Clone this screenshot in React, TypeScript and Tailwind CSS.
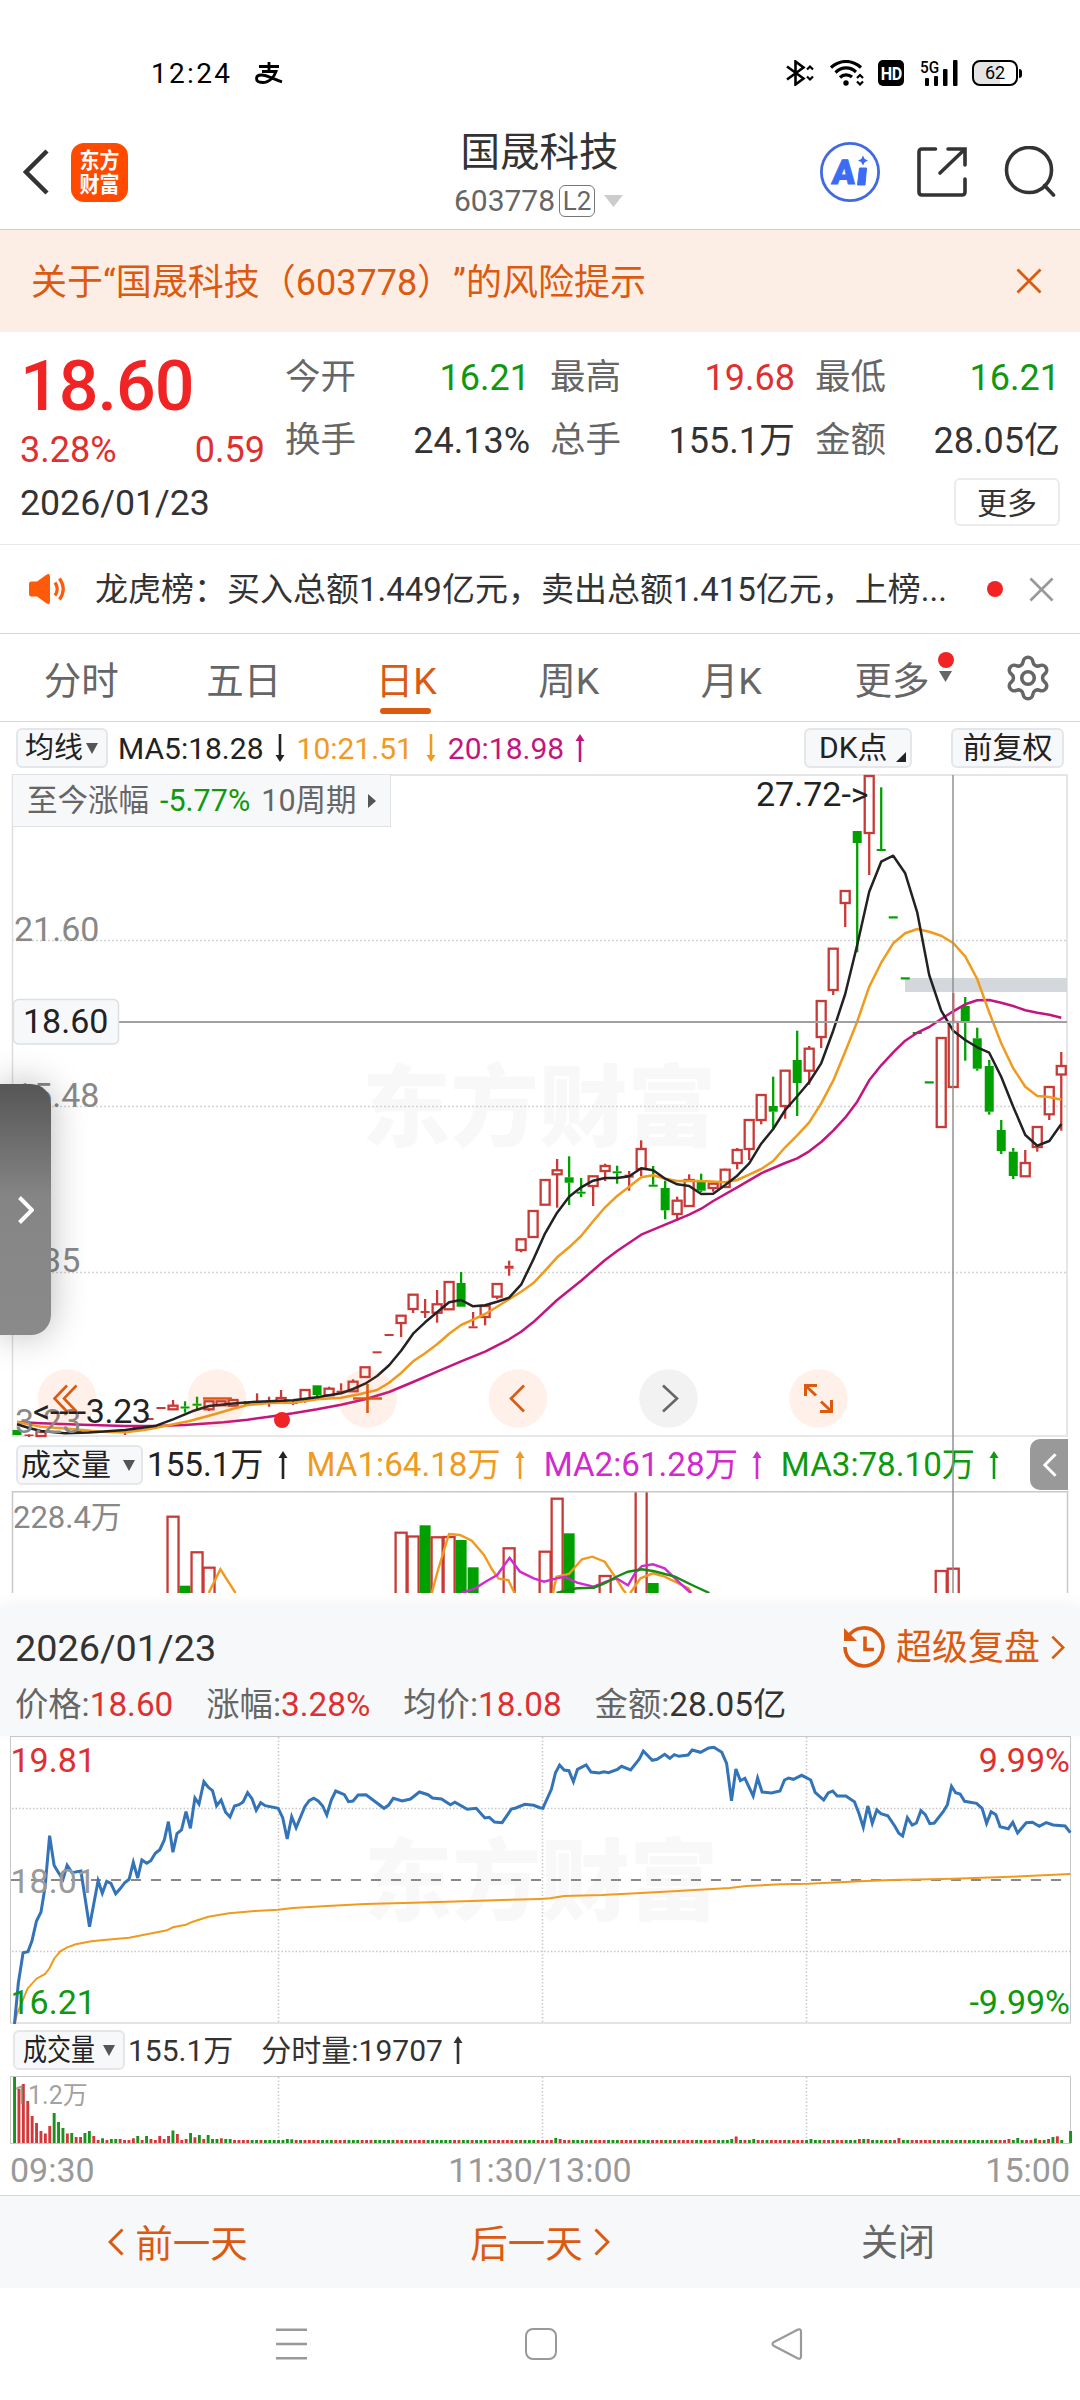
import { FunctionComponent, ReactNode } from "react";
import { Settings } from "lucide-react";

type Point = [number, number];

// [index, direction, high, bodyTop, bodyBottom, low]
type Candle = [number, "r" | "g", number, number, number, number];

const RED = "#c93a37";
const GREEN = "#00a000";
const ORANGE = "#f09a1e";
const MAGENTA = "#c4157f";

const candleX = (index: number) => 17 + index * 12.003;

const candles: Candle[] = [
    [0, "g", 1430, 1430, 1435, 1435],
    [1, "r", 1434, 1434.5, 1436, 1437],
    [2, "r", 1432, 1432, 1436, 1437],
    [3, "r", 1431, 1431, 1433, 1433],
    [5, "r", 1431, 1431, 1432, 1433],
    [7, "r", 1431, 1431, 1432, 1433],
    [8, "r", 1430, 1430, 1431, 1432],
    [9, "r", 1430, 1431, 1432, 1435],
    [10, "r", 1427, 1427, 1429, 1429],
    [11, "r", 1418, 1418, 1420, 1420],
    [12, "r", 1407, 1407, 1409, 1409],
    [13, "r", 1400, 1405.7, 1409.3, 1409.3],
    [14, "g", 1401.3, 1406.5, 1408.5, 1412.7],
    [15, "g", 1396.7, 1403.7, 1405.7, 1410.7],
    [16, "r", 1401.3, 1401.3, 1409.3, 1411],
    [17, "r", 1401, 1401.3, 1405.3, 1406],
    [18, "r", 1400, 1400, 1405.7, 1406],
    [19, "g", 1401, 1402, 1404, 1405.5],
    [20, "r", 1393.3, 1401, 1403, 1403],
    [21, "r", 1396.7, 1401.3, 1403.3, 1406.7],
    [22, "r", 1390, 1398, 1401.7, 1402],
    [23, "r", 1400, 1402, 1404, 1405],
    [24, "r", 1390, 1390, 1399.3, 1402.7],
    [25, "g", 1385.3, 1385.3, 1395, 1397],
    [26, "r", 1386.7, 1388.7, 1395.3, 1396],
    [27, "r", 1383.3, 1390.7, 1392.7, 1393],
    [28, "r", 1379.3, 1381.7, 1391.3, 1391.3],
    [29, "r", 1367.3, 1367.3, 1377, 1377],
    [30, "r", 1351.3, 1351.3, 1353.3, 1353.3],
    [31, "r", 1334, 1334, 1336, 1336],
    [32, "r", 1315.7, 1315.7, 1323, 1337],
    [33, "r", 1294.7, 1294.7, 1309, 1313],
    [34, "r", 1299, 1311, 1313, 1318],
    [35, "r", 1290, 1304.3, 1312.7, 1322.7],
    [36, "r", 1282, 1282, 1309.3, 1310],
    [37, "g", 1272, 1283, 1306.7, 1306.7],
    [38, "r", 1312, 1326.3, 1328.3, 1328.3],
    [39, "r", 1306, 1306, 1317, 1325.3],
    [40, "r", 1284, 1284, 1296.7, 1299.3],
    [41, "r", 1260.7, 1265.7, 1268.7, 1275.7],
    [42, "r", 1239.3, 1239.3, 1250, 1252.3],
    [43, "r", 1211, 1211, 1237, 1238],
    [44, "r", 1180, 1180, 1204.7, 1205],
    [45, "r", 1159, 1170.3, 1174.3, 1207.7],
    [46, "g", 1156.3, 1177.3, 1182.7, 1205],
    [47, "g", 1178, 1191.7, 1193.7, 1197],
    [48, "r", 1176.3, 1176.3, 1186, 1206],
    [49, "r", 1163.7, 1166, 1171, 1181],
    [50, "g", 1165.7, 1171.3, 1173.3, 1183.7],
    [51, "r", 1171, 1174.7, 1177.7, 1190.7],
    [52, "r", 1140.3, 1149, 1169, 1176],
    [53, "g", 1166, 1184.7, 1186.7, 1186.7],
    [54, "g", 1180.7, 1188, 1210.3, 1219.3],
    [55, "r", 1196.7, 1200.7, 1214, 1220.7],
    [56, "r", 1174.3, 1180, 1206, 1206],
    [57, "g", 1173.7, 1180, 1190.7, 1192],
    [58, "r", 1183, 1183.7, 1188, 1191.7],
    [59, "r", 1168.7, 1169.7, 1187, 1187],
    [60, "r", 1148, 1150, 1163, 1169.3],
    [61, "r", 1120, 1120, 1149, 1160],
    [62, "r", 1095, 1095, 1120, 1124.3],
    [63, "g", 1076.7, 1106, 1111.7, 1128],
    [64, "r", 1070.7, 1070.7, 1106, 1118.7],
    [65, "g", 1030.7, 1060, 1083, 1116],
    [66, "r", 1046, 1048.7, 1070.7, 1084.7],
    [67, "r", 1001, 1001, 1037, 1048],
    [68, "r", 948.7, 948.7, 990, 995],
    [69, "r", 891, 891, 903, 927],
    [70, "g", 831, 831, 843, 952.3],
    [71, "r", 776, 776, 833, 875],
    [72, "g", 787.3, 849, 851, 851],
    [73, "g", 916.3, 916.3, 918.5, 918.3],
    [74, "g", 977.3, 977.3, 979.5, 979.3],
    [75, "g", 1032, 1032, 1034, 1034],
    [76, "g", 1081.3, 1081.3, 1083.5, 1083.3],
    [77, "r", 1038, 1038, 1127, 1127],
    [78, "r", 993, 1022, 1087, 1087],
    [79, "g", 997, 1006, 1022.3, 1060.7],
    [80, "g", 1027.7, 1038.3, 1068.7, 1070.7],
    [81, "g", 1060, 1066, 1111.7, 1114.7],
    [82, "g", 1120, 1130, 1151, 1154],
    [83, "g", 1148, 1151.7, 1176, 1179],
    [84, "r", 1150, 1163, 1176.3, 1176.3],
    [85, "r", 1127, 1127, 1147, 1151.7],
    [86, "r", 1087, 1087, 1114.3, 1120],
    [87, "r", 1052, 1066, 1074.5, 1130.7],
];

const ma5: Point[] = [
    [0, 1424.3], [1, 1428], [2, 1431], [4, 1433.3], [6, 1432.5], [9, 1430], [10.3, 1428], [11.6, 1425.7],
    [13, 1419.3], [14.6, 1411.3], [16, 1406], [18, 1403.5], [20, 1401.7], [23, 1400.3], [25, 1397.3],
    [27, 1393.3], [28, 1389], [29, 1383.7], [30, 1376], [31, 1365.3], [32, 1350.7], [33, 1333.7],
    [34, 1322.3], [35, 1312.3], [36, 1302.3], [37, 1300], [38, 1306.3], [39, 1305.3], [40, 1301.7],
    [41, 1297.7], [42, 1284.7], [43, 1260], [44, 1233.3], [45, 1212.7], [46, 1196.7], [47, 1187.3],
    [48, 1180.7], [49, 1178], [50, 1178], [51, 1176.3], [52, 1168.3], [53, 1170.3], [54, 1178.7],
    [55, 1184.3], [56, 1186], [57, 1194], [58, 1193.7], [59, 1185], [60, 1175.7], [61, 1163.3],
    [62, 1143.7], [63, 1129], [64, 1110], [65, 1096.3], [66, 1082], [67, 1063.3], [68, 1030.7],
    [69, 994], [70, 945], [71, 891.7], [72, 861.7], [73, 855.7], [74, 873.3], [75, 912.3], [76, 975],
    [77, 1010.7], [78, 1030.7], [79, 1040], [80, 1047.3], [81, 1052.7], [82, 1076.7], [83, 1106.7],
    [84, 1135], [85, 1145.7], [86, 1141], [87, 1124],
];

const ma10: Point[] = [
    [0, 1422], [2, 1426.7], [4.3, 1428.7], [7, 1431.7], [9, 1432.3], [10.6, 1430], [12.3, 1426],
    [14.3, 1421.3], [16.3, 1414.7], [18, 1408.7], [19.2, 1405], [21, 1403], [23, 1402.7], [25, 1399.3],
    [27, 1397.7], [28.5, 1394.3], [30, 1390], [31, 1382.7], [32, 1373], [33, 1361.3], [34, 1353.3],
    [35, 1344.3], [36, 1333.7], [37, 1325], [38, 1319.7], [39, 1314], [40, 1306.7], [41, 1299.3],
    [42, 1291.7], [43, 1283.3], [44, 1270.7], [45, 1257.3], [46, 1247.3], [47, 1236], [48, 1221.3],
    [49, 1207.3], [50, 1196], [51, 1186.7], [52, 1177.3], [53, 1175.3], [54, 1178.7], [55, 1181],
    [57, 1181], [59, 1182.3], [60, 1180], [61, 1174.7], [62, 1169], [63, 1161], [64, 1147.3],
    [65, 1135.3], [66, 1122.3], [67, 1103.3], [68, 1080.7], [69, 1051.7], [70, 1021.7], [71, 986.7],
    [72, 962.7], [73, 943.3], [74, 933.3], [75, 929], [76, 931.7], [77, 935.7], [78, 943], [79, 956.3],
    [80, 979], [81, 1012.3], [82, 1043.3], [83, 1068.3], [84, 1086.7], [85, 1096], [86, 1097], [87, 1099.7],
];

const ma20: Point[] = [
    [0, 1422], [2, 1423.3], [5.5, 1424.7], [9, 1426], [11.5, 1426], [14, 1425], [17.2, 1422.3],
    [19.2, 1419.7], [21, 1416.7], [23, 1413.3], [25, 1409.3], [27, 1404.7], [29, 1399.3], [31, 1392],
    [33, 1382], [35, 1371.7], [37, 1361.3], [39, 1351.7], [41, 1339.3], [42, 1331.7], [43, 1322.3],
    [45, 1300], [47, 1280.7], [49, 1260], [50, 1251], [52, 1234.7], [54, 1224.7], [56, 1214.7],
    [57, 1208.7], [58, 1201], [60, 1187.3], [62, 1173.3], [64, 1163], [65, 1158.3], [66, 1151.3],
    [67, 1142], [68, 1130.7], [69, 1117.7], [70, 1101.7], [71, 1080.3], [72, 1065.3], [73, 1052.3],
    [74, 1040.7], [75, 1032.7], [76, 1027], [77, 1019], [78, 1011.3], [79, 1004.3], [80, 1000.3],
    [81, 1000], [82, 1002.7], [83, 1006], [84, 1010.3], [85, 1012.7], [86, 1014.7], [87, 1017.7],
];

// [index, direction, top]
const volumes: [number, "r" | "g", number][] = [
    [13, "r", 1516.7], [14, "g", 1585.7], [15, "r", 1552.3], [16, "r", 1567.7], [32, "r", 1532.7],
    [33, "r", 1536.5], [34, "g", 1525.3], [35, "r", 1537.3], [36, "r", 1537], [37, "g", 1540],
    [38, "g", 1567.3], [41, "r", 1548.3], [44, "r", 1551.7], [45, "r", 1498.7], [46, "g", 1533.3],
    [49, "r", 1576], [52, "r", 1490], [53, "g", 1583], [77, "r", 1571], [78, "r", 1568.7],
];

const volumeLines = [
    { color: ORANGE, points: "208.7,1593 220.4,1569.3 235.5,1593" },
    { color: ORANGE, points: "431.8,1593 438,1570 449,1534 460,1535 471.8,1540.7 484,1555 492.4,1570 498.6,1578.7 508.3,1580 514.5,1593" },
    { color: ORANGE, points: "553,1593 556.5,1576.7 568.9,1574 582,1559.3 592.3,1556.7 604.7,1561.7 615,1576.7 623.3,1590 626,1593" },
    { color: ORANGE, points: "630.2,1593 640.5,1578.3 652.9,1573.3 664.6,1576.7 688.7,1588.3 691.5,1593" },
    { color: "#d02ad0", points: "461.4,1593 475.2,1588.3 485.5,1581.7 497.2,1575 509.6,1557.7 520,1571.7 533.7,1578.3 544,1581.7 556.5,1578.3 564.7,1576.7 577,1582.7 593.7,1586.7 606,1581.7 616.4,1578.3 628,1585.3 635,1573.3 641.9,1566 652.9,1564.3 664.6,1568.3 678.4,1581.7 690.8,1593" },
    { color: "#148c14", points: "556.5,1593 568.2,1590 577,1588.3 593.7,1587.7 606,1582.7 616.4,1576.7 628,1571.7 641.9,1569.3 654.3,1571.3 674.9,1576.7 692,1585 709.4,1593" },
];

// intraday series, one list for each half of the session
const morning: Point[] = [
    [42, 912], [53, 790], [67, 698], [81, 695], [93, 662], [106, 603], [119, 576], [131, 500], [144, 347],
    [157, 436], [170, 458], [183, 478], [195, 436], [209, 458], [235, 453], [260, 620], [285, 482],
    [297, 520], [310, 484], [322, 490], [336, 521], [350, 505], [362, 488], [375, 478], [387, 427],
    [400, 474], [412, 420], [426, 430], [438, 422], [451, 400], [464, 389], [477, 360], [489, 305],
    [502, 397], [514, 341], [527, 330], [540, 275], [553, 325], [566, 234], [578, 252], [592, 185],
    [605, 202], [617, 212], [629, 257], [642, 240], [655, 277], [668, 291], [681, 258], [694, 254],
    [706, 246], [719, 218], [732, 237], [744, 271], [757, 248], [770, 257], [808, 265], [821, 293],
    [834, 357], [847, 290], [860, 323], [885, 260], [898, 242], [911, 235], [924, 243], [937, 258],
    [949, 285], [962, 240], [975, 213], [1000, 224], [1012, 245], [1025, 243], [1040, 225], [1063, 224],
    [1090, 245], [1115, 265], [1128, 256], [1142, 235], [1168, 243], [1192, 237], [1218, 216],
    [1243, 224], [1256, 234], [1282, 237], [1308, 254], [1321, 247], [1357, 268], [1383, 265],
    [1408, 294], [1421, 292], [1436, 306], [1458, 308], [1485, 267], [1498, 264], [1524, 253],
    [1550, 256], [1568, 263],
];

const afternoon: Point[] = [
    [8, 265], [33, 208], [45, 158], [57, 135], [70, 150], [84, 152], [97, 185], [109, 148], [134, 135],
    [148, 156], [172, 159], [186, 155], [199, 158], [225, 148], [237, 139], [263, 150], [288, 118],
    [300, 93], [326, 121], [340, 118], [362, 103], [377, 115], [390, 104], [403, 109], [430, 105],
    [442, 90], [466, 97], [490, 84], [505, 82], [528, 97], [542, 130], [556, 242], [569, 147],
    [582, 182], [595, 175], [619, 228], [632, 174], [645, 216], [672, 219], [697, 213], [710, 180],
    [722, 174], [736, 178], [760, 166], [786, 180], [799, 217], [824, 240], [837, 219], [850, 213],
    [863, 228], [888, 228], [913, 245], [926, 280], [939, 322], [952, 258], [965, 310], [978, 270],
    [990, 281], [1010, 287], [1030, 318], [1042, 340], [1053, 348], [1067, 293], [1081, 315],
    [1093, 309], [1106, 272], [1119, 284], [1132, 311], [1145, 309], [1171, 275], [1183, 254],
    [1195, 199], [1207, 218], [1220, 222], [1233, 244], [1268, 250], [1284, 265], [1297, 310],
    [1310, 275], [1324, 284], [1336, 320], [1360, 326], [1373, 307], [1387, 339], [1412, 308],
    [1430, 307], [1450, 319], [1470, 308], [1490, 315], [1525, 318], [1540, 338],
];

const averageMorning: Point[] = [
    [42, 912], [50, 880], [67, 838], [80, 806], [106, 776], [131, 762], [144, 744], [157, 716], [175, 694],
    [195, 682], [220, 673], [265, 664], [310, 659], [375, 653], [430, 642], [485, 631], [502, 622],
    [540, 614], [560, 605], [605, 590], [665, 580], [740, 573], [808, 569], [850, 564], [950, 558],
    [1060, 552], [1200, 548], [1370, 543], [1480, 539], [1568, 537],
];

const averageAfternoon: Point[] = [
    [0, 537], [30, 535], [70, 528], [180, 525], [280, 520], [400, 513], [550, 504], [600, 498],
    [700, 493], [780, 491], [930, 484], [1020, 480], [1200, 476], [1400, 469], [1540, 462],
];

const minuteDirections =
    "grrrrrrrrgggrgrrggrrgrggrrrrgrgrrrrrgrrrgrgrgggrgg" +
    "rrrrggrgggggggrgrrrrgggrrrgggrrrgggggrrgrrrrggggggrrggrgggrrrrr" +
    "rgrgggrrrrgrrrgggrgrrrgggrrrrgggrrrgrgrrrrggrrrggggrgrggrrgrrrrgrr" +
    "rggggrrgrrgggrgrgggrgrrggrrrrrgrggrggrgggggrgrrrgggrrgrgrgrggrrgg";

const minuteHeights: Record<number, number> = {
    0: 66, 1: 54, 2: 59, 3: 42, 4: 27, 5: 20, 6: 12, 7: 9.5, 8: 17, 9: 30, 10: 21, 11: 15, 12: 9.5, 13: 10,
    14: 6, 15: 6, 16: 10, 17: 12, 18: 7, 20: 4.7, 22: 4, 23: 4, 24: 4, 27: 4.7, 28: 7, 30: 7, 31: 4, 33: 7,
    34: 4, 35: 7, 36: 12.5, 37: 9, 39: 4, 40: 10, 41: 5.7, 42: 8, 43: 4, 44: 8, 45: 4, 46: 4, 47: 4.7,
    48: 4, 49: 4, 62: 4, 63: 3.7, 123: 5, 124: 4, 163: 4, 164: 6.5, 168: 4, 181: 4, 192: 4, 193: 4, 194: 4,
    201: 5, 226: 4, 228: 5, 232: 4.5, 235: 4, 236: 6, 237: 6.7, 240: 12,
};

const indexPath = (points: Point[]) => points.map(([i, y]) => `${candleX(i).toFixed(1)},${y}`).join(" ");

const sessionPath = (am: Point[], pm: Point[]) =>
    [
        ...am.map(([x, y]) => [x / 2.904, 1720 + y / 3]),
        ...pm.map(([x, y]) => [540 + x / 2.904, 1720 + y / 3]),
    ]
        .map(([x, y]) => `${x.toFixed(1)},${y.toFixed(1)}`)
        .join(" ");

const Arrow: FunctionComponent<{ down?: boolean; className?: string }> = ({ down, className }) => (
    <svg viewBox="0 0 10 28" className={`h-7 w-2.5 shrink-0 ${down ? "rotate-180" : ""} ${className ?? ""}`}>
        <path d="M5 4V28" stroke="currentColor" strokeWidth="2.6" />
        <path d="M5 0L9.5 7H0.5Z" fill="currentColor" />
    </svg>
);

const Caret: FunctionComponent<{ className: string }> = ({ className }) => (
    <svg viewBox="0 0 12 11" preserveAspectRatio="none" className={className}>
        <path d="M0 0H12L6 11Z" fill="currentColor" />
    </svg>
);

const Chevron: FunctionComponent<{ left?: boolean; className: string; width?: number }> = ({ left, className, width = 3 }) => (
    <svg viewBox="0 0 16 28" fill="none" stroke="currentColor" strokeWidth={width} className={className}>
        <path d={left ? "M14.5 1.5L2 14L14.5 26.5" : "M1.5 1.5L14 14L1.5 26.5"} />
    </svg>
);

const Close: FunctionComponent<{ className: string }> = ({ className }) => (
    <svg viewBox="0 0 26 26" fill="none" stroke="currentColor" strokeWidth="2.8" className={className}>
        <path d="M1.5 1.5L24.5 24.5M24.5 1.5L1.5 24.5" />
    </svg>
);

const StatusBar = () => (
    <div className="flex h-[120px] items-center pt-[26px] pr-[58px] pl-[151px] text-black">
        <span className="pt-0.5 text-[28px] tracking-[2.3px]">12:24</span>
        <svg viewBox="0 0 28 22" fill="none" stroke="currentColor" strokeWidth="2.8" className="ml-[23px] h-[22px] w-7">
            <path d="M4 4.5H24M14 0V9M7 9.5H21C19.5 14 15 20.5 7.5 20.5C3.5 20.5 1.5 18.8 1.5 16.6C1.5 14.4 3.6 13 6.5 13C12 13 19 17.5 27 19.8" />
        </svg>
        <div className="ml-auto flex items-center">
            <svg viewBox="0 0 28 26" fill="none" stroke="currentColor" strokeWidth="2.6" className="h-[26px] w-7">
                <path d="M1 6.5L17.5 18.5L9.5 24.5V1.5L17.5 7.5L1 19.5" />
                <path d="M21 9.5L24 6.5L27 9.5M21 16.5L24 19.5L27 16.5" strokeWidth="2.2" />
            </svg>
            <svg viewBox="0 0 34 26" fill="none" stroke="currentColor" strokeWidth="3.2" className="ml-4 h-[26px] w-[34px]">
                <path d="M1 7.5C10 -0.5 22 -0.5 31 7.5M5.5 12.5C12 6.5 20 6.5 26 12M10 17.5C13.5 14 18.5 14 22 17" />
                <circle cx="16" cy="23" r="2.7" fill="currentColor" stroke="none" />
                <path d="M27 18L30 15L33 18M27 21.5L30 24.5L33 21.5" strokeWidth="2.2" />
            </svg>
            <div className="ml-[14px] flex h-[26px] w-[26px] items-center justify-center rounded-[5px] bg-black text-[19px] leading-none font-bold tracking-[-0.5px] text-white">
                <span className="scale-x-[.85]">HD</span>
            </div>
            <div className="relative ml-4 h-[26px] w-[38px]">
                <span className="absolute top-0 left-0 origin-left scale-x-90 text-[17px] leading-[14px] font-medium">5G</span>
                <svg viewBox="0 0 38 26" fill="currentColor" className="h-[26px] w-[38px]">
                    <rect x="5" y="18" width="4" height="8" rx="1" />
                    <rect x="14" y="16" width="4" height="10" rx="1" />
                    <rect x="23" y="9" width="4.5" height="17" rx="1" />
                    <rect x="33" y="0" width="4.5" height="26" rx="1" />
                </svg>
            </div>
            <div className="ml-[14px] flex h-[26px] w-[46px] items-center justify-center rounded-lg border-[2.5px] border-black bg-linear-to-r from-[#e4e4e4] from-62% to-white to-62% text-[18px] leading-none">
                62
            </div>
            <div className="ml-px h-[9px] w-[3px] rounded-r bg-black" />
        </div>
    </div>
);

const Header = () => (
    <div className="flex h-[110px] items-center border-b border-[#d0d0d4] pb-[5px] text-[#333]">
        <div className="flex flex-1 items-center pl-[23px]">
            <svg viewBox="0 0 26 46" fill="none" stroke="currentColor" strokeWidth="4.5" className="h-[46px] w-[26px]">
                <path d="M24 2L3 23L24 44" />
            </svg>
            <div className="ml-[22px] flex h-[59px] w-[57px] flex-col items-center justify-center rounded-[13px] bg-[#ff4a00] text-[20px] leading-6 font-bold text-white">
                <span className="scale-y-110">东方</span>
                <span className="scale-y-110">财富</span>
            </div>
        </div>
        <div className="mt-2 flex flex-col items-center">
            <span className="h-[49px] text-[39.5px] leading-[50px]">国晟科技</span>
            <div className="flex h-12 items-center text-[#666]">
                <span className="text-[30px]">603778</span>
                <span className="ml-1 flex h-8 w-9 items-center justify-center rounded-md border-[1.5px] border-[#777] text-[26px] leading-none">L2</span>
                <Caret className="mr-0.5 ml-[9px] h-3 w-[19px] text-[#ccc]" />
            </div>
        </div>
        <div className="flex flex-1 items-center justify-end pr-[24px]">
            <svg viewBox="0 0 60 60" className="h-[60px] w-[60px] text-[#3c6cf5]">
                <circle cx="30" cy="30" r="28.6" fill="none" stroke="#4169e1" strokeWidth="2.8" />
                <text x="11" y="42" fontSize="34" fontWeight="900" fill="currentColor" stroke="currentColor" strokeWidth="1" transform="skewX(-5) translate(4 0)">A</text>
                <path d="M39.500 26H46.500L45 43H37.500Z" fill="currentColor" stroke="currentColor" strokeWidth="1" strokeLinejoin="round" />
                <path d="M43 13.500L44.700 17L48 18.500L44.700 20.200L43 23.500L41.300 20.200L38 18.500L41.300 17Z" fill="currentColor" />
            </svg>
            <svg viewBox="0 0 50 50" fill="none" stroke="currentColor" strokeWidth="3.6" strokeLinecap="round" className="ml-[37px] h-[50px] w-[50px]">
                <path d="M18.500 2H5Q2 2 2 5V45Q2 48 5 48H45Q48 48 48 45V32M31 2H48V18M47 3L23 26" />
            </svg>
            <svg viewBox="0 0 52 52" fill="none" stroke="currentColor" strokeWidth="3.6" strokeLinecap="round" className="ml-[37px] h-[52px] w-[52px]">
                <circle cx="25" cy="24" r="22.500" />
                <path d="M40.500 39.500L49.500 49" />
            </svg>
        </div>
    </div>
);

const RiskBanner = () => (
    <div className="flex h-[102px] items-center justify-between bg-[#fdeee5] pr-[38px] pl-[31px] text-[#dc5a10]">
        <span className="pt-1 text-[36px] whitespace-nowrap [text-spacing-trim:space-all]">关于“国晟科技（603778）”的风险提示</span>
        <Close className="h-[26px] w-[26px]" />
    </div>
);

const quotes = [
    { label: "今开", value: "16.21", color: "text-[#0e990e]" },
    { label: "最高", value: "19.68", color: "text-[#de3030]" },
    { label: "最低", value: "16.21", color: "text-[#0e990e]" },
    { label: "换手", value: "24.13%", color: "text-[#333]" },
    { label: "总手", value: "155.1万", color: "text-[#333]" },
    { label: "金额", value: "28.05亿", color: "text-[#333]" },
];

const Quote = () => (
    <div className="h-[213px] border-b border-[#e8e8ec] px-5">
        <div className="flex h-[138px]">
            <div className="mt-2 w-[245px] text-[#f02424]">
                <div className="flex h-[92px] items-center text-[70px] leading-none font-medium tracking-[-1px]">18.60</div>
                <div className="flex h-[34px] items-center justify-between pt-0.5 text-[36px] leading-none text-[#de3030]">
                    <span>3.28%</span>
                    <span>0.59</span>
                </div>
            </div>
            <div className="mt-3 ml-5 grid grid-cols-3 gap-x-5 pt-[2px]">
                {quotes.map(({ label, value, color }) => (
                    <div key={label} className="flex h-[63px] w-[245px] items-center justify-between">
                        <span className="text-[35.5px]">
                            <span className="text-[#666]">{label}</span>
                        </span>
                        <span className={`text-[36px] ${color}`}>{value}</span>
                    </div>
                ))}
            </div>
        </div>
        <div className="mt-2 flex h-12 items-center justify-between text-[#333]">
            <span className="pt-[3px] text-[35.7px]">2026/01/23</span>
            <span className="flex h-12 w-[106px] items-center justify-center rounded-md border-2 border-[#ebecef] pt-0.5 text-[30px]">更多</span>
        </div>
    </div>
);

const Notice = () => (
    <div className="flex h-[89px] items-center border-b border-[#d8d8da] pr-[26px] pl-7">
        <svg viewBox="0 0 40 32" className="h-8 w-10 text-[#ff5a0a]">
            <path d="M3 8.500H9L18 2Q22 -1 22 4V28Q22 33 18 30L9 23.500H3Q1 23.500 1 21V11Q1 8.500 3 8.500Z" fill="currentColor" />
            <path d="M27 9.500Q31.500 16 27 22.500M31.500 5.500Q39 16 31.500 26.500" fill="none" stroke="currentColor" strokeWidth="3.200" />
        </svg>
        <span className="ml-[27px] pt-px text-[33px] whitespace-nowrap text-[#333]">龙虎榜：买入总额1.449亿元，卖出总额1.415亿元，上榜...</span>
        <span className="ml-auto h-4 w-4 rounded-full bg-[#f02424]" />
        <Close className="ml-[26px] h-[25px] w-[25px] text-[#999]" />
    </div>
);

const tabs = ["分时", "五日", "日K", "周K", "月K"];

const Tabs = () => (
    <div className="flex h-[88px] items-center border-b border-[#d8d8da] text-[37.5px] text-[#666]">
        {tabs.map((tab) => (
            <div
                key={tab}
                className={`relative flex h-full w-[162.500px] items-center justify-center pt-[7px] ${tab === "日K" ? "text-[#dc5a10]" : ""}`}
            >
                {tab}
                {tab === "日K" && <span className="absolute bottom-[7px] left-[55px] h-[6px] w-[51px] rounded-[3px] bg-[#dc5a10]" />}
            </div>
        ))}
        <div className="relative ml-[42px] flex h-full items-center pt-[7px]">
            更多
            <span className="absolute top-[18px] -right-6 h-4 w-4 rounded-full bg-[#f02424]" />
            <Caret className="absolute top-[37px] -right-[22px] h-[11px] w-[13px]" />
        </div>
        <Settings className="ml-[73px] h-[50px] w-[50px]" strokeWidth={1.7} />
    </div>
);

const Pill: FunctionComponent<{ className: string; children: ReactNode }> = ({ className, children }) => (
    <div className={`flex h-10 shrink-0 items-center rounded-md border-2 border-[#e4e6e9] bg-[#f7f8fa] text-[30px] leading-none text-[#222] ${className}`}>
        {children}
    </div>
);

const AverageRow = () => (
    <div className="flex h-[52px] items-center pl-4 text-[30px] text-[#222]">
        <Pill className="w-[92px] pl-[7px]">
            <span className="text-[29px]">均线</span>
            <Caret className="ml-[3px] h-[11px] w-3 text-[#555]" />
        </Pill>
        <span className="ml-[10px]">MA5:18.28</span>
        <Arrow down className="ml-[11px]" />
        <div className="ml-3 flex items-center text-[#f09a1e]">
            10:21.51
            <Arrow down className="ml-[13px]" />
        </div>
        <div className="ml-3 flex items-center text-[#c4157f]">
            20:18.98
            <Arrow className="ml-[11px]" />
        </div>
        <Pill className="relative ml-auto w-[108px] pl-[13px]">
            DK点
            <svg viewBox="0 0 10 10" className="absolute right-1 bottom-1 h-[10px] w-[10px]">
                <path d="M10 0V10H0Z" fill="#222" />
            </svg>
        </Pill>
        <Pill className="mr-4 ml-[39px] w-[113px] justify-center">前复权</Pill>
    </div>
);

const CandleMark: FunctionComponent<{ candle: Candle }> = ({ candle }) => {
    const [index, direction, high, top, bottom, low] = candle;
    const x = candleX(index);
    const color = direction === "r" ? RED : GREEN;
    const hollow = direction === "r" && bottom - top > 3.5;
    return (
        <g stroke={color} strokeWidth="2.3">
            {high < top && <path d={`M${x} ${high}V${top}`} />}
            {low > bottom && <path d={`M${x} ${bottom}V${low}`} />}
            {hollow ? (
                <rect x={x - 4.5} y={top} width="9" height={bottom - top} fill="none" />
            ) : (
                <rect x={x - 4.5} y={top} width="9" height={bottom - top} fill={color} stroke="none" />
            )}
        </g>
    );
};

const Watermark: FunctionComponent<{ x: number; y: number }> = ({ x, y }) => (
    <text x={x} y={y} fontSize="88.500" fontWeight="900" fill="#f8f8f8">东方财富</text>
);

const KLineChart = () => (
    <svg viewBox="0 774 1080 663" className="block h-[663px] w-[1080px] overflow-visible" fontSize="34">
        <Watermark x={362} y={1139} />
        <g stroke="#d4d4d4" strokeWidth="1.500" strokeDasharray="2 2">
            <path d="M12 940.500H1067M12 1106.500H1067M12 1272.500H1067" />
        </g>
        <rect x="12.500" y="775" width="1054.500" height="661" fill="none" stroke="#dedede" strokeWidth="1.500" />
        <rect x="905" y="978" width="162" height="14" fill="#d4d7dc" />
        {candles.map((candle) => (
            <CandleMark key={candle[0]} candle={candle} />
        ))}
        <g fill="none" strokeWidth="2.500" strokeLinejoin="round">
            <polyline points={indexPath(ma20)} stroke={MAGENTA} />
            <polyline points={indexPath(ma10)} stroke={ORANGE} />
            <polyline points={indexPath(ma5)} stroke="#222" />
        </g>
        <g fill="#888">
            <text x="14" y="941">21.60</text>
            <text x="14" y="1107">15.48</text>
            <text x="14" y="1272">9.35</text>
            <text x="15" y="1433">3.23</text>
        </g>
        <text x="756" y="806" fill="#222">27.72-&gt;</text>
        <path d="M119 1022H1067" stroke="#a0a0a0" strokeWidth="2" />
        <rect x="13.500" y="999.500" width="105" height="44.500" rx="5" fill="#f7f8fa" stroke="#dcdfe3" strokeWidth="1.500" />
        <text x="23" y="1033" fill="#222">18.60</text>
        <g fill="#fb6414" fillOpacity=".09">
            <circle cx="67" cy="1398.500" r="29.300" />
            <circle cx="217" cy="1398.500" r="29.300" />
            <circle cx="367.500" cy="1398.500" r="29.300" />
            <circle cx="518" cy="1398.500" r="29.300" />
            <circle cx="668.500" cy="1398.500" r="29.300" fill="#000" fillOpacity=".05" />
            <circle cx="818.500" cy="1398.500" r="29.300" />
        </g>
        <g fill="none" stroke="#dc5a10" strokeWidth="2.600">
            <path d="M67 1385.500L54.500 1398.500L67 1411.500M76.500 1385.500L64 1398.500L76.500 1411.500" />
            <path d="M203 1398.500H232M353 1398.500H382M367.500 1384V1413" />
            <path d="M524 1385.500L511 1398.500L524 1411.500" />
            <path d="M663 1385.500L677 1398.500L663 1411.500" stroke="#666" />
            <path d="M805.500 1396V1385.500H817M806 1386L816 1395.500M831.500 1400V1411.500H820M831 1411L821 1401.500" strokeWidth="3" />
        </g>
        <text x="33" y="1423" fill="#222" letterSpacing="-0.400">&lt;----3.23</text>
        <circle cx="282" cy="1420" r="8" fill="#f02424" />
    </svg>
);

const VolumeRow = () => (
    <div className="flex h-[54px] items-center pt-0.5 pl-4 text-[33.2px] text-[#222]">
        <Pill className="w-[127px] pl-[3px]">
            成交量
            <Caret className="ml-3 h-[11px] w-3 text-[#555]" />
        </Pill>
        <div className="ml-1 flex items-center">
            155.1万
            <Arrow className="ml-[14px]" />
        </div>
        <div className="ml-[19px] flex items-center text-[#f09a1e]">
            MA1:64.18万
            <Arrow className="ml-[14px]" />
        </div>
        <div className="ml-[19px] flex items-center text-[#d02ad0]">
            MA2:61.28万
            <Arrow className="ml-[14px]" />
        </div>
        <div className="ml-[19px] flex items-center text-[#0e990e]">
            MA3:78.10万
            <Arrow className="ml-[14px]" />
        </div>
    </div>
);

const VolumeChart = () => (
    <svg viewBox="0 1491 1080 102" className="block h-[102px] w-[1080px]">
        <text x="13" y="1528" fontSize="31" fill="#888">228.4万</text>
        {volumes.map(([index, direction, top]) => (
            <rect
                key={index}
                x={candleX(index) - 5.5}
                y={top}
                width="11"
                height="120"
                fill={direction === "r" ? "none" : GREEN}
                stroke={direction === "r" ? RED : "none"}
                strokeWidth="2.300"
            />
        ))}
        <g fill="none" strokeWidth="2.400">
            {volumeLines.map(({ color, points }) => (
                <polyline key={points} points={points} stroke={color} />
            ))}
        </g>
        <path d="M12.500 1593V1491.800H1067.500V1593" fill="none" stroke="#c8c8c8" strokeWidth="1.500" />
    </svg>
);

const KLinePanel = () => (
    <div className="relative">
        <KLineChart />
        <VolumeRow />
        <VolumeChart />
        <div className="absolute top-px bottom-0 left-[952px] w-0.5 bg-[#909090]/75" />
        <div className="absolute top-0 left-3 flex h-[53px] w-[379px] items-center border border-[#dfe1e4] bg-[#f7f8fa] pl-[14px] text-[30.5px] whitespace-nowrap text-[#666]">
            至今涨幅
            <span className="mx-[11px] text-[#0e990e]">-5.77%</span>
            10周期
            <svg viewBox="0 0 8 14" className="ml-[11px] h-[14px] w-2">
                <path d="M0 0L8 7L0 14Z" fill="#555" />
            </svg>
        </div>
        <div className="absolute top-[310px] left-0 flex h-[251px] w-[51px] items-center rounded-r-[20px] bg-linear-to-b from-[#565656] via-[#858585] via-45% to-[#8a8a8a] pl-[18px] text-white shadow-[0_0_36px_rgba(0,0,0,0.28)]">
            <Chevron className="h-7 w-4" width={4} />
        </div>
        <div className="absolute top-[665px] right-3 flex h-[51px] w-[38px] items-center rounded-l-[10px] bg-[#999] pl-[13px] text-white">
            <Chevron left className="h-6 w-[14px]" width={3.4} />
        </div>
    </div>
);

const sheetQuotes = [
    { label: "价格:", value: "18.60", color: "text-[#de3030]" },
    { label: "涨幅:", value: "3.28%", color: "text-[#de3030]" },
    { label: "均价:", value: "18.08", color: "text-[#de3030]" },
    { label: "金额:", value: "28.05亿", color: "text-[#333]" },
];

const SheetHeader = () => (
    <div className="h-[128px] bg-[#f7f8fa] shadow-[0_-4px_14px_rgba(0,0,0,0.05)]">
        <div className="flex h-[78px] items-center justify-between pr-[15px] pl-[15px]">
            <span className="pt-0.5 text-[37.8px] text-[#333]">2026/01/23</span>
            <div className="flex items-center text-[#dc5a10]">
                <svg viewBox="0 0 42 42" fill="none" stroke="currentColor" strokeWidth="3.600" className="h-[42px] w-[42px]">
                    <path d="M4.500 11.500A19 19 0 1 1 2 21" />
                    <path d="M22 10.500V23.500H31" />
                    <path d="M1 2V15H14Z" fill="currentColor" stroke="none" />
                </svg>
                <span className="ml-[11px] pt-0.5 text-[36px]">超级复盘</span>
                <Chevron className="ml-[11px] h-[25px] w-[14px]" />
            </div>
        </div>
        <div className="flex h-[34px] items-center gap-[33px] pt-1 pl-[15px] text-[33.3px]">
            {sheetQuotes.map(({ label, value, color }) => (
                <div key={label} className="whitespace-nowrap text-[#666]">
                    {label}
                    <span className={color}>{value}</span>
                </div>
            ))}
        </div>
    </div>
);

const IntradayChart = () => (
    <svg viewBox="0 1736 1080 288" className="block h-[288px] w-[1080px]" fontSize="34">
        <Watermark x={364} y={1913} />
        <g stroke="#c8c8c8" strokeWidth="1.500" strokeDasharray="1.500 2">
            <path d="M12 1808.500H1070M12 1951.500H1070M278.500 1737V2023M542.500 1737V2023M806.500 1737V2023" />
        </g>
        <rect x="10.500" y="1736.500" width="1060" height="286.500" fill="none" stroke="#c8c8c8" />
        <path d="M11 1880H1070" stroke="#888" strokeWidth="2" strokeDasharray="10 10" />
        <polyline points={sessionPath(averageMorning, averageAfternoon)} fill="none" stroke={ORANGE} strokeWidth="2" />
        <polyline points={sessionPath(morning, afternoon)} fill="none" stroke="#3373b8" strokeWidth="3" />
        <text x="10.500" y="1772" fill="#de3030">19.81</text>
        <text x="10.500" y="1893" fill="#999">18.01</text>
        <text x="10.500" y="2014" fill="#0e990e">16.21</text>
        <text x="1070" y="1772" fill="#de3030" textAnchor="end">9.99%</text>
        <text x="1070" y="2014" fill="#0e990e" textAnchor="end">-9.99%</text>
    </svg>
);

const IntradayVolume = () => (
    <svg viewBox="0 2076 1080 68" className="block h-[68px] w-[1080px]">
        <path d="M278.500 2077V2143M542.500 2077V2143M806.500 2077V2143" stroke="#c8c8c8" strokeWidth="1.500" strokeDasharray="1.500 2" />
        <rect x="10.500" y="2076.500" width="1060" height="67" fill="none" stroke="#c8c8c8" />
        {[...minuteDirections].slice(0, 241).map((direction, i) => {
            if (i === 239) return null;
            const height = minuteHeights[i] ?? 3;
            return (
                <rect
                    key={i}
                    x={13.1 + i * 4.4}
                    y={2143 - height}
                    width="2.900"
                    height={height}
                    fill={i === 240 || direction === "g" ? "#1a931a" : "#d33838"}
                />
            );
        })}
        <text x="14" y="2104" fontSize="25" fill="#888" fillOpacity=".8">11.2万</text>
    </svg>
);

const App = () => (
    <div className="h-[2400px] w-[1080px] overflow-hidden bg-white font-['Roboto','Noto_Sans_CJK_SC',sans-serif]">
        <StatusBar />
        <Header />
        <RiskBanner />
        <Quote />
        <Notice />
        <Tabs />
        <AverageRow />
        <KLinePanel />
        <div className="h-[15px]" />
        <SheetHeader />
        <IntradayChart />
        <div className="flex h-[52px] items-center pl-[13px] text-[30px] text-[#333]">
            <Pill className="w-[112px] pl-2">
                <span className="w-[72px] origin-left scale-x-80 whitespace-nowrap">成交量</span>
                <Caret className="ml-[8px] h-[11px] w-3 shrink-0 text-[#555]" />
            </Pill>
            <span className="ml-[3px]">155.1万</span>
            <span className="ml-[28px]">分时量:19707</span>
            <Arrow className="ml-[10px]" />
        </div>
        <IntradayVolume />
        <div className="flex h-[51px] items-center justify-between pt-0.5 pr-[10px] pl-[10px] text-[34px] text-[#999]">
            <span>09:30</span>
            <span>11:30/13:00</span>
            <span>15:00</span>
        </div>
        <div className="grid h-[93px] grid-cols-3 border-t border-[#d4d6da] bg-[#f7f8fa] pt-1 text-[37.5px] text-[#dc5a10]">
            <div className="flex items-center justify-center pr-1">
                <Chevron left className="mr-[11px] mb-1 h-7 w-4" />
                前一天
            </div>
            <div className="flex items-center justify-center">
                后一天
                <Chevron className="mb-1 ml-[11px] h-7 w-4" />
            </div>
            <div className="flex items-center justify-center pr-1 text-[37px] text-[#666]">关闭</div>
        </div>
        <div className="flex h-[112px] items-center pl-[276px]">
            <svg viewBox="0 0 31 32" stroke="#999" strokeWidth="2.600" className="h-8 w-[31px]">
                <path d="M0 1.700H31M0 16H31M0 30.300H31" />
            </svg>
            <div className="ml-[218px] h-8 w-8 rounded-[8px] border-2 border-[#999]" />
            <svg viewBox="0 0 32 32" fill="none" stroke="#999" strokeWidth="2.200" strokeLinejoin="round" className="ml-[214px] h-8 w-8">
                <path d="M27 1.500Q30 0.500 30 4V28Q30 31.500 27 30.500L3 18Q0 16 3 14Z" />
            </svg>
        </div>
    </div>
);

export default App;
